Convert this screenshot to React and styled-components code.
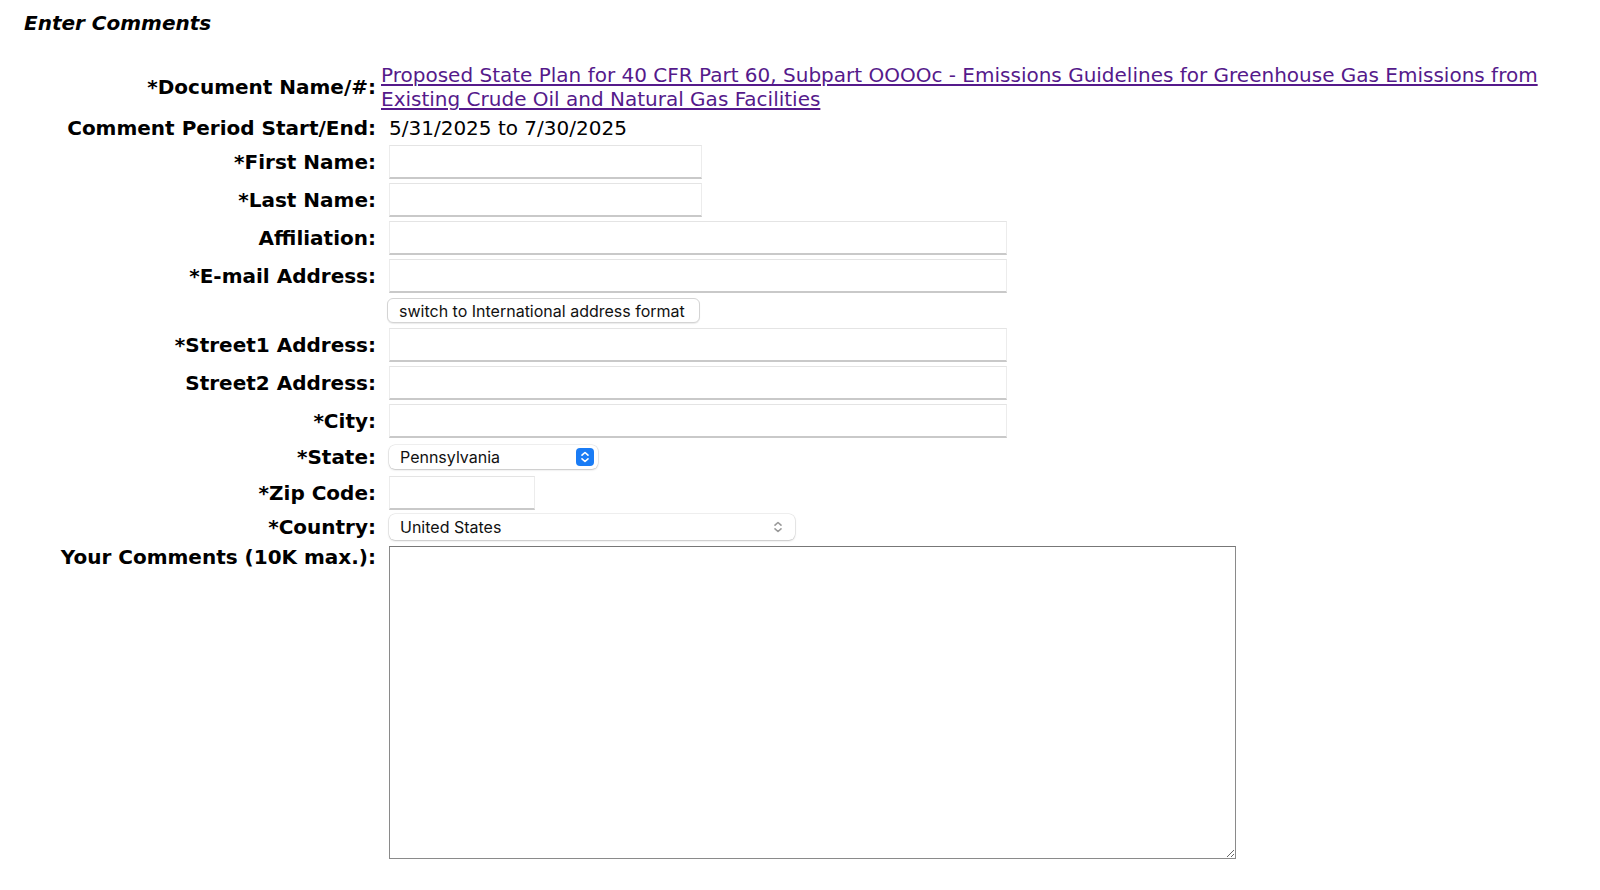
import React from 'react';
import styled, { createGlobalStyle } from 'styled-components';

const GlobalStyle = createGlobalStyle`
  html, body {
    margin: 0;
    padding: 0;
    background: #ffffff;
  }
  body {
    font-family: "DejaVu Sans", Verdana, sans-serif;
    color: #000000;
  }
`;

const Page = styled.div`
  width: 1600px;
  height: 890px;
  overflow: hidden;
  padding-top: 11px;
  box-sizing: border-box;
`;

const Heading = styled.h2`
  margin: 0 0 28px 24px;
  font-size: 20px;
  line-height: 24px;
  font-weight: bold;
  font-style: italic;
`;

const FormGrid = styled.div`
  display: grid;
  grid-template-columns: 376px 1fr;
  row-gap: 4px;
  align-items: center;
`;

const Label = styled.div`
  text-align: right;
  font-weight: bold;
  font-size: 20px;
  line-height: 24px;
  white-space: nowrap;
  align-self: ${(p) => (p.$top ? 'start' : 'center')};
  padding-top: ${(p) => (p.$top ? '1px' : '0')};
`;

const Value = styled.div`
  display: flex;
  align-items: center;
  padding-left: ${(p) => (p.$pad != null ? p.$pad : 13)}px;
  min-height: ${(p) => p.$h || 0}px;
  font-size: 20px;
  line-height: 24px;
`;

const DocLink = styled.a`
  color: #551a8b;
  text-decoration: underline;
  text-underline-offset: 2px;
  max-width: 1175px;
`;

const TextInput = styled.input`
  box-sizing: border-box;
  width: ${(p) => p.$w}px;
  height: 34px;
  margin: 0;
  border: 1px solid #ececec;
  border-bottom: 2px solid #c9c9c9;
  border-top-color: #e4e4e4;
  background: #ffffff;
  font-size: 16px;
  padding: 2px 6px;
  outline: none;
`;

const SwitchButton = styled.button`
  box-sizing: border-box;
  margin: 1px 0 1px -2px;
  height: 25px;
  width: 313px;
  padding: 0 11px;
  border: 1px solid #d4d4d4;
  border-radius: 6px;
  background: #ffffff;
  box-shadow: 0 1px 1px rgba(0, 0, 0, 0.08);
  font-family: Inter, "Liberation Sans", sans-serif;
  font-size: 16px;
  color: #111111;
  text-align: left;
  white-space: nowrap;
`;

const SelectBox = styled.div`
  box-sizing: border-box;
  display: flex;
  align-items: center;
  width: ${(p) => p.$w}px;
  height: ${(p) => (p.$tall ? 26 : 24)}px;
  padding: 0 4px 0 11px;
  border-radius: 6px;
  background: #ffffff;
  box-shadow: 0 0 0 0.5px rgba(0, 0, 0, 0.12), 0 1px 2px rgba(0, 0, 0, 0.18);
`;

const NativeSelect = styled.select`
  flex: 1;
  appearance: none;
  -webkit-appearance: none;
  border: none;
  background: transparent;
  outline: none;
  padding: 0;
  margin: 0;
  font-family: Inter, "Liberation Sans", sans-serif;
  font-size: 16px;
  color: #111111;
`;

const Stepper = styled.span`
  display: flex;
  align-items: center;
  justify-content: center;
  width: 18px;
  height: 18px;
  border-radius: 4px;
  background: ${(p) => (p.$blue ? '#1a7cf5' : 'transparent')};
  margin-right: ${(p) => (p.$blue ? 0 : 4)}px;
`;

const CommentBox = styled.textarea`
  box-sizing: border-box;
  width: 847px;
  height: 313px;
  margin: 2px 0 0 0;
  border: 1px solid #8a8a8a;
  border-top-color: #777777;
  background: #ffffff;
  resize: both;
  font-size: 16px;
  outline: none;
`;

const Chevrons = ({ color }) => (
  <svg width="10" height="14" viewBox="0 0 10 14" fill="none">
    <path d="M2 5.2 L5 2.5 L8 5.2" stroke={color} strokeWidth="1.6" strokeLinecap="round" strokeLinejoin="round" />
    <path d="M2 8.8 L5 11.5 L8 8.8" stroke={color} strokeWidth="1.6" strokeLinecap="round" strokeLinejoin="round" />
  </svg>
);

const textRows = [
  { label: '*First Name:', w: 313 },
  { label: '*Last Name:', w: 313 },
  { label: 'Affiliation:', w: 618 },
  { label: '*E-mail Address:', w: 618 },
];

const addressRows = [
  { label: '*Street1 Address:', w: 618 },
  { label: 'Street2 Address:', w: 618 },
  { label: '*City:', w: 618 },
];

export default function App() {
  return (
    <Page>
      <GlobalStyle />
      <Heading>Enter Comments</Heading>
      <FormGrid>
        <Label>*Document Name/#:</Label>
        <Value $pad={5}>
          <DocLink href="#">
            Proposed State Plan for 40 CFR Part 60, Subpart OOOOc - Emissions Guidelines for Greenhouse Gas Emissions from Existing Crude Oil and Natural Gas Facilities
          </DocLink>
        </Value>

        <Label>Comment Period Start/End:</Label>
        <Value $h={26}>5/31/2025 to 7/30/2025</Value>

        {textRows.map((r) => (
          <React.Fragment key={r.label}>
            <Label>{r.label}</Label>
            <Value>
              <TextInput type="text" $w={r.w} />
            </Value>
          </React.Fragment>
        ))}

        <div />
        <Value>
          <SwitchButton type="button">switch to International address format</SwitchButton>
        </Value>

        {addressRows.map((r) => (
          <React.Fragment key={r.label}>
            <Label>{r.label}</Label>
            <Value>
              <TextInput type="text" $w={r.w} />
            </Value>
          </React.Fragment>
        ))}

        <Label>*State:</Label>
        <Value $h={30}>
          <SelectBox $w={209}>
            <NativeSelect defaultValue="PA">
              <option value="PA">Pennsylvania</option>
            </NativeSelect>
            <Stepper $blue>
              <Chevrons color="#ffffff" />
            </Stepper>
          </SelectBox>
        </Value>

        <Label>*Zip Code:</Label>
        <Value>
          <TextInput type="text" $w={146} />
        </Value>

        <Label>*Country:</Label>
        <Value $h={26}>
          <SelectBox $w={406} $tall>
            <NativeSelect defaultValue="US">
              <option value="US">United States</option>
            </NativeSelect>
            <Stepper>
              <Chevrons color="#9a9a9a" />
            </Stepper>
          </SelectBox>
        </Value>

        <Label $top>Your Comments (10K max.):</Label>
        <Value>
          <CommentBox />
        </Value>
      </FormGrid>
    </Page>
  );
}
